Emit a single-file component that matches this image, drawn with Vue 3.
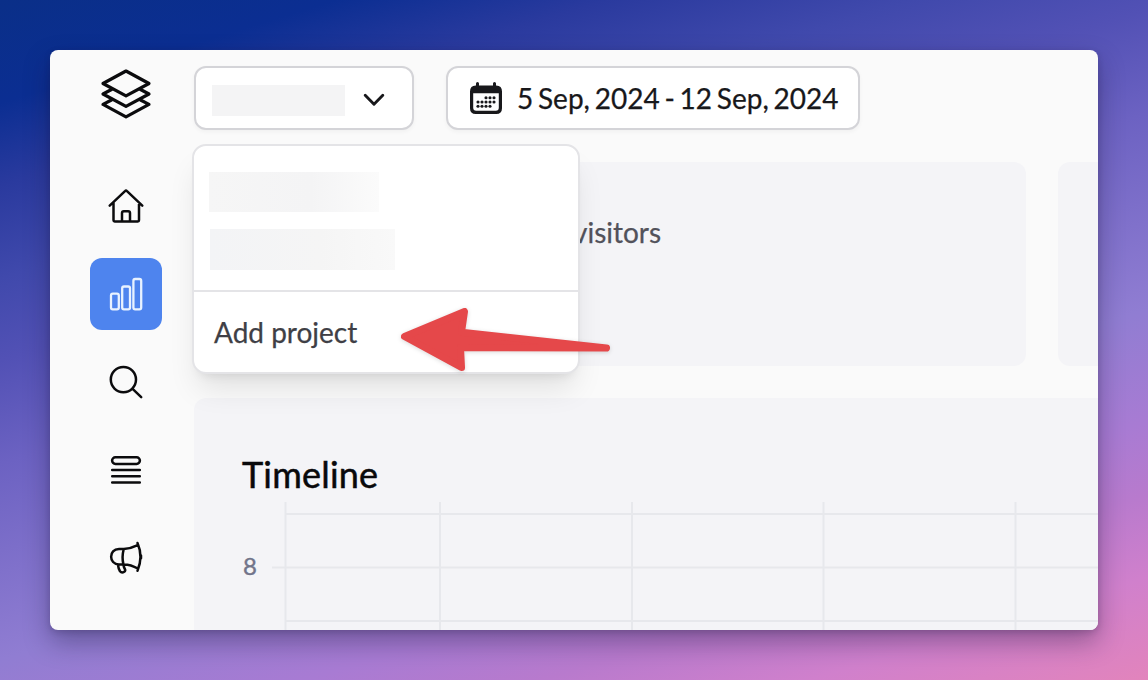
<script setup>
const verticals = [91.5, 246, 438, 629.5, 821.5]
const dots = [
  [486, 97.7], [490, 97.7], [494, 97.7],
  [478, 102], [482, 102], [486, 102], [490, 102], [494, 102],
  [478, 106.2], [482, 106.2], [486, 106.2], [490, 106.2],
]
</script>

<template>
  <div class="backdrop">
    <div class="window">
      <nav class="sidebar">
        <svg class="logo" viewBox="96 64 60 60" fill="none" stroke="#0b0b0d" stroke-width="3.2" stroke-linejoin="round" stroke-linecap="round">
          <path d="M126 71 149 83.5 126 95.8 103 83.5Z" />
          <path d="M111.5 89.5 103 94 126 106.4 149 94 140.5 89.5" />
          <path d="M111.5 100 103 104.4 126 116.8 149 104.4 140.5 100" />
        </svg>
        <a class="item first">
          <svg viewBox="102 182 48 48" fill="none" stroke="#0b0b0d" stroke-width="2.5" stroke-linejoin="round" stroke-linecap="round">
            <path d="M109.7 205.6 125 191.2Q126 190.2 127 191.2L142.3 205.6M113.5 202.5V220.2Q113.5 221.4 114.7 221.4H137.8Q139 221.4 139 220.2V202.5M122 221V213Q122 211.2 123.8 211.2H128.2Q130 211.2 130 213V221" />
          </svg>
        </a>
        <a class="item active">
          <svg viewBox="102 270 48 48" fill="none" stroke="#e8f2ff" stroke-width="2.3">
            <rect x="111" y="293.7" width="7.8" height="15.6" rx="1.8" />
            <rect x="122.2" y="286.5" width="7.8" height="22.8" rx="1.8" />
            <rect x="133.4" y="279" width="7.8" height="30.3" rx="1.8" />
          </svg>
        </a>
        <a class="item">
          <svg viewBox="102 358 48 48" fill="none" stroke="#0b0b0d" stroke-width="2.5" stroke-linecap="round">
            <circle cx="123.4" cy="379.6" r="12.6" />
            <path d="M132.6 388.9 141.2 397.2" />
          </svg>
        </a>
        <a class="item">
          <svg viewBox="102 446 48 48" fill="none" stroke="#0b0b0d" stroke-width="2.5" stroke-linecap="round">
            <rect x="112.1" y="457.3" width="27.8" height="6.6" rx="3.3" />
            <path d="M112.2 470H139.8M112.2 476.3H139.8M112.2 482.6H139.8" />
          </svg>
        </a>
        <a class="item">
          <svg viewBox="102 534 48 48" fill="none" stroke="#0b0b0d" stroke-width="2.5" stroke-linejoin="round" stroke-linecap="round">
            <path d="M123.8 549H119C108.5 549 108.5 564.4 119 564.4H123.4M123.8 549Q121.6 556.7 123.4 564.4M123.8 549Q131 548.6 137.8 545.2M123.4 564.4Q130.5 564.2 137.8 568.5M137.5 543Q143.4 556.5 137.5 570.8M141 555.5V558.2M118 565Q118.5 569 120 571.3Q121.7 573.4 124.3 571.8Q125.8 570.6 124.8 568.8Q123.8 567.2 123.5 565" />
          </svg>
        </a>
      </nav>

      <main class="main">
        <header class="toolbar">
          <button class="control project">
            <span class="mask"></span>
            <svg viewBox="0 0 24 16" width="24" height="16" fill="none" stroke="#18181b" stroke-width="2.9" stroke-linecap="round" stroke-linejoin="round"><path d="M3.2 3.3 12 12.2 20.8 3.3" /></svg>
          </button>
          <button class="control date">
            <svg viewBox="470 82 32 32" width="32" height="32">
              <path fill="#18181b" fill-rule="evenodd" d="M475.8 85.5H496.2Q502 85.5 502 91.5V108.2Q502 114 496.2 114H475.8Q470 114 470 108.2V91.5Q470 85.5 475.8 85.5ZM473.2 93.2V107.8Q473.2 110.8 476.2 110.8H495.8Q498.8 110.8 498.8 107.8V93.2Z" />
              <path d="M477.5 83.5V88M494.5 83.5V88" stroke="#18181b" stroke-width="3" stroke-linecap="round" />
              <circle v-for="(d, i) in dots" :key="i" :cx="d[0]" :cy="d[1]" r="1.55" fill="#18181b" />
            </svg>
            <span>5 Sep, 2024 - 12 Sep, 2024</span>
          </button>
        </header>

        <section class="stats">
          <article class="stat"><span class="label">visitors</span></article>
          <article class="stat"></article>
        </section>

        <section class="timeline">
          <h2>Timeline</h2>
          <svg class="chart" viewBox="0 0 904 140" width="904" height="140">
            <g stroke="#e7e8ec" stroke-width="2">
              <path v-for="x in verticals" :key="x" :d="`M${x} 4V140`" />
              <path d="M91 16H904M78 69.5H904M91 123H904" />
            </g>
            <text x="49" y="77">8</text>
          </svg>
        </section>

        <div class="menu">
          <div class="projects">
            <span class="mask one"></span>
            <span class="mask two"></span>
          </div>
          <div class="add">Add project</div>
        </div>
        <svg class="arrow" viewBox="395 300 222 80" width="222" height="80">
          <path d="M404.5 336.5 464.5 311.5 461.5 332.2 606.5 348 460.5 347.5 461.5 367.5Z" fill="#e5484a" stroke="#e5484a" stroke-width="7" stroke-linejoin="round" />
        </svg>
      </main>
    </div>
  </div>
</template>

<style>
body { margin: 0; overflow: hidden; }
</style>

<style scoped>
* { box-sizing: border-box; }
.backdrop {
  width: 1148px;
  height: 680px;
  padding: 50px;
  font-family: Lato, "Liberation Sans", sans-serif;
  -webkit-text-stroke: .25px currentColor;
  background: linear-gradient(163deg, #0a2f88 0%, #0b2e92 10%, #2a3a9e 18%, #4049ac 27%, #5251b5 35%, #6c62c2 45%, #907dd2 64%, #a87bd3 75%, #b87acd 82%, #d080cc 90%, #e284bc 100%);
}
.window {
  display: flex;
  width: 1048px;
  height: 580px;
  overflow: hidden;
  border-radius: 8px;
  background: #fafafa;
  box-shadow: 0 12px 26px rgba(25, 20, 55, .36), 0 2px 6px rgba(25, 20, 55, .18);
}
.sidebar {
  flex: 0 0 144px;
  padding: 14px 0 0 40px;
  display: flex;
  flex-direction: column;
  align-items: flex-start;
}
.logo { width: 60px; height: 60px; margin-left: 6px; }
.item {
  width: 72px;
  height: 72px;
  margin-top: 16px;
  display: grid;
  place-items: center;
  border-radius: 12px;
}
.item svg { width: 48px; height: 48px; }
.item.first { margin-top: 46px; }
.item.active { background: #4e84ee; }
.main { position: relative; flex: none; width: 1700px; }
.toolbar { display: flex; gap: 32px; padding-top: 16px; }
.control {
  height: 64px;
  display: flex;
  align-items: center;
  border: 2px solid #d4d4d8;
  border-radius: 12px;
  background: #fff;
  color: #18181b;
  font: inherit;
  font-size: 28px;
  white-space: nowrap;
  box-shadow: 0 2px 4px rgba(0, 0, 0, .04);
}
.project { width: 220px; padding: 4px 16px 0; gap: 17px; }
.project .mask { width: 133px; height: 31px; background: #f4f4f5; }
.date { width: 414px; padding: 0 0 0 22px; gap: 15px; word-spacing: -2.4px; }
.stats { display: flex; gap: 32px; margin-top: 32px; }
.stat {
  flex: none;
  width: 832px;
  height: 204px;
  padding: 52px 0 0 380px;
  border-radius: 12px;
  background: #f4f4f7;
}
.label { font-size: 28px; line-height: 36px; color: #52525b; margin-left: -1px; }
.timeline {
  height: 300px;
  margin-top: 32px;
  padding-top: 52px;
  border-radius: 12px;
  background: #f4f4f7;
}
h2 {
  margin: 0 0 0 48px;
  font-size: 36px;
  line-height: 48px;
  font-weight: 400;
  letter-spacing: .2px;
  color: #09090b;
  -webkit-text-stroke-width: .5px;
}
.chart { display: block; }
.chart text { font-size: 24px; fill: #71748a; stroke: #71748a; stroke-width: .4px; }
.menu {
  position: absolute;
  left: -2px;
  top: 94px;
  width: 388px;
  height: 230px;
  border: 2px solid #e4e4e7;
  border-radius: 14px;
  background: #fff;
  box-shadow: 0 20px 30px -6px rgba(0, 0, 0, .1), 0 8px 12px -8px rgba(0, 0, 0, .12);
}
.projects {
  height: 146px;
  padding: 26px 15px 0;
  display: flex;
  flex-direction: column;
  gap: 17px;
  border-bottom: 2px solid #e4e4e7;
}
.projects .mask { flex: none; }
.one { width: 170px; height: 40px; background: linear-gradient(90deg, #f6f6f6, #f4f4f5 60%, #fbfbfb); }
.two { width: 185px; height: 41px; margin-left: 1px; background: linear-gradient(90deg, #f3f4f6, #f5f5f5 60%, #f9f9f9); }
.add { padding: 22px 20px; font-size: 28px; line-height: 36px; color: #3f3f46; }
.arrow {
  position: absolute;
  left: 201px;
  top: 250px;
  filter: drop-shadow(0 1px 2px rgba(0, 0, 0, .15));
}
</style>
